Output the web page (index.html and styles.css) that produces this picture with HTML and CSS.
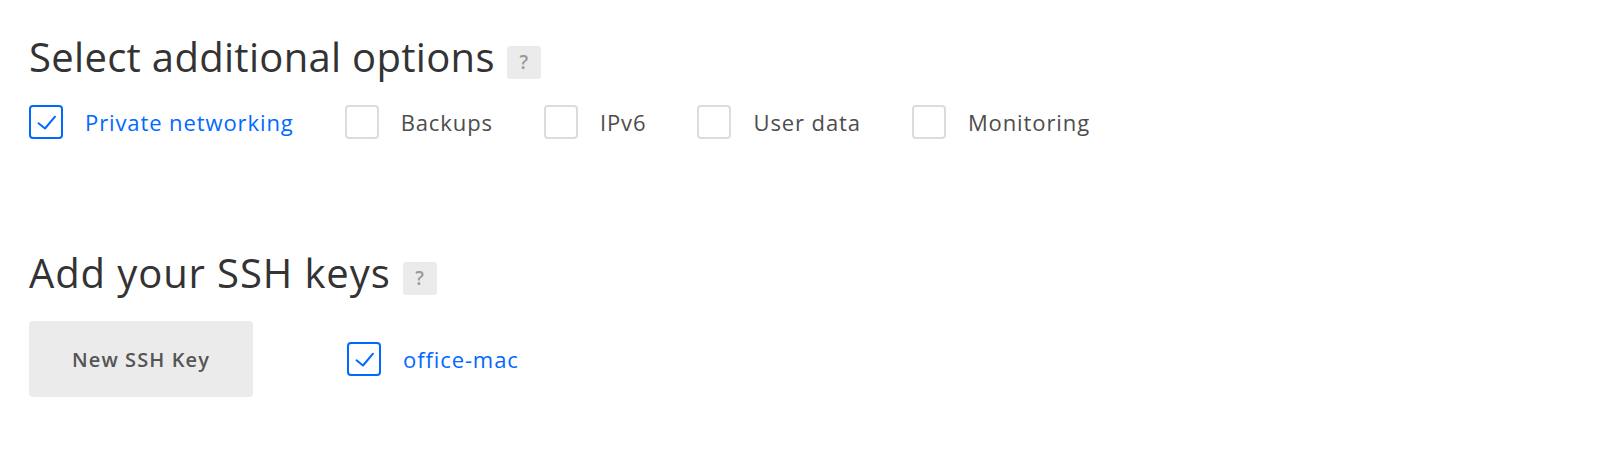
FILE: index.html
```html
<!DOCTYPE html>
<html lang="en">
<head>
<meta charset="utf-8">
<title>Options</title>
<link rel="stylesheet" href="styles.css">
</head>
<body>
<main class="page">
  <section class="section section-options">
    <h2 class="heading"><span class="heading-text">Select additional options</span><span class="help">?</span></h2>
    <div class="options">
      <label class="option is-checked">
        <span class="box"><svg viewBox="0 0 34 34" width="34" height="34"><path d="M9.5 18.3 L16 23.5 L26 11.7" fill="none" stroke="#0069ff" stroke-width="2" stroke-linecap="round" stroke-linejoin="round"/></svg></span>
        <span class="label">Private networking</span>
      </label>
      <label class="option">
        <span class="box"></span>
        <span class="label">Backups</span>
      </label>
      <label class="option">
        <span class="box"></span>
        <span class="label">IPv6</span>
      </label>
      <label class="option">
        <span class="box"></span>
        <span class="label">User data</span>
      </label>
      <label class="option">
        <span class="box"></span>
        <span class="label">Monitoring</span>
      </label>
    </div>
  </section>
  <section class="section section-ssh">
    <h2 class="heading"><span class="heading-text heading-text-ssh">Add your SSH keys</span><span class="help">?</span></h2>
    <div class="ssh-row">
      <button class="btn" type="button">New SSH Key</button>
      <label class="option is-checked">
        <span class="box"><svg viewBox="0 0 34 34" width="34" height="34"><path d="M9.5 18.3 L16 23.5 L26 11.7" fill="none" stroke="#0069ff" stroke-width="2" stroke-linecap="round" stroke-linejoin="round"/></svg></span>
        <span class="label">office-mac</span>
      </label>
    </div>
  </section>
</main>
</body>
</html>
```
FILE: styles.css
```css
* { box-sizing: border-box; }
html, body { margin: 0; padding: 0; background: #fff; }
body { font-family: "Open Sans", "Liberation Sans", sans-serif; color: #333; }

.page {
  padding: 33px 0 0 29px;
}

.heading {
  display: flex;
  align-items: flex-start;
  gap: 12px;
  margin: 0;
  font-size: 40px;
  line-height: 48px;
  font-weight: 400;
  color: #333;
}
.heading-text { letter-spacing: 0.3px; }
.heading-text-ssh { letter-spacing: 0.9px; }

.help {
  display: flex;
  align-items: center;
  justify-content: center;
  width: 34px;
  height: 33px;
  margin-top: 13px;
  border-radius: 3px;
  background: #ebebeb;
  color: #999;
  font-size: 19px;
  line-height: 1;
  font-weight: 600;
  letter-spacing: 0;
}

.options {
  display: flex;
  gap: 51px;
  margin-top: 24px;
}

.option {
  display: flex;
  align-items: center;
  gap: 22px;
  cursor: pointer;
}

.box {
  display: block;
  width: 34px;
  height: 34px;
  border: 2px solid #dcdcdc;
  border-radius: 4px;
  position: relative;
}
.box svg { position: absolute; left: -2px; top: -2px; }

.option.is-checked .box { border-color: #0069ff; }

.label {
  font-size: 22px;
  line-height: 34px;
  letter-spacing: 0.9px;
  color: #4d4d4d;
}
.option.is-checked .label { color: #0069ff; }

.section-ssh { margin-top: 110px; }

.ssh-row {
  display: flex;
  align-items: center;
  gap: 94px;
  margin-top: 24px;
}

.btn {
  width: 224px;
  height: 76px;
  border: 0;
  border-radius: 4px;
  background: #ebebeb;
  color: #555;
  font-family: inherit;
  font-size: 20px;
  font-weight: 600;
  letter-spacing: 1.1px;
  padding: 0;
}
```
